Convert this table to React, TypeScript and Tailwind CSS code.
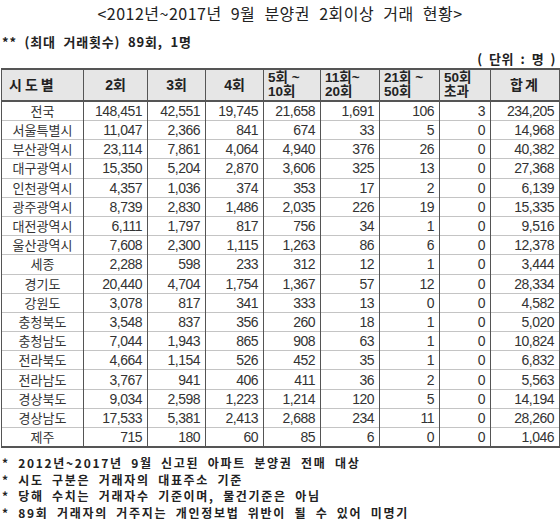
const rows: string[][] = [
  ["전국", "148,451", "42,551", "19,745", "21,658", "1,691", "106", "3", "234,205"],
  ["서울특별시", "11,047", "2,366", "841", "674", "33", "5", "0", "14,968"],
  ["부산광역시", "23,114", "7,861", "4,064", "4,940", "376", "26", "0", "40,382"],
  ["대구광역시", "15,350", "5,204", "2,870", "3,606", "325", "13", "0", "27,368"],
  ["인천광역시", "4,357", "1,036", "374", "353", "17", "2", "0", "6,139"],
  ["광주광역시", "8,739", "2,830", "1,486", "2,035", "226", "19", "0", "15,335"],
  ["대전광역시", "6,111", "1,797", "817", "756", "34", "1", "0", "9,516"],
  ["울산광역시", "7,608", "2,300", "1,115", "1,263", "86", "6", "0", "12,378"],
  ["세종", "2,288", "598", "233", "312", "12", "1", "0", "3,444"],
  ["경기도", "20,440", "4,704", "1,754", "1,367", "57", "12", "0", "28,334"],
  ["강원도", "3,078", "817", "341", "333", "13", "0", "0", "4,582"],
  ["충청북도", "3,548", "837", "356", "260", "18", "1", "0", "5,020"],
  ["충청남도", "7,044", "1,943", "865", "908", "63", "1", "0", "10,824"],
  ["전라북도", "4,664", "1,154", "526", "452", "35", "1", "0", "6,832"],
  ["전라남도", "3,767", "941", "406", "411", "36", "2", "0", "5,563"],
  ["경상북도", "9,034", "2,598", "1,223", "1,214", "120", "5", "0", "14,194"],
  ["경상남도", "17,533", "5,381", "2,413", "2,688", "234", "11", "0", "28,260"],
  ["제주", "715", "180", "60", "85", "6", "0", "0", "1,046"],
];

const widths = [82, 64, 58, 58, 57, 59, 60, 51, 69];

const notes = [
  "* 2012년~2017년 9월 신고된 아파트 분양권 전매 대상",
  "* 시도 구분은 거래자의 대표주소 기준",
  "* 당해 수치는 거래자수 기준이며, 물건기준은 아님",
  "* 89회 거래자의 거주지는 개인정보법 위반이 될 수 있어 미명기",
];

const kr = "font-['Noto_Sans_CJK_KR',sans-serif]";
const num = "font-['Liberation_Sans','Noto_Sans_CJK_KR',sans-serif]";

function TwoLine({ a, b }: { a: string; b: string }) {
  return (
    <div className="flex flex-col items-start pl-[4px] text-[13.5px] leading-[14px]">
      <span className="block h-[14px] leading-[14px]">{a}</span>
      <span className="block h-[14px] leading-[14px]">{b}</span>
    </div>
  );
}

export default function App() {
  return (
    <div className={`w-[560px] h-[521px] overflow-hidden bg-white text-[#222] ${kr}`}>
      <div className="h-[26px] flex items-center justify-center text-[16px] tracking-[0.5px] [word-spacing:5px]">
        &lt;2012년~2017년 9월 분양권 2회이상 거래 현황&gt;
      </div>
      <div className="mt-[8px] h-[16px] leading-[16px] pl-[2px] text-[13px] font-bold tracking-[0.8px] [word-spacing:4px]">
        ** (최대 거래횟수) 89회, 1명
      </div>
      <div className="h-[18px] leading-[18px] pr-[4px] text-right text-[13px] font-bold tracking-[0.5px] [word-spacing:3px]">
        ( 단위 : 명 )
      </div>
      <table className="ml-[1px] border-collapse table-fixed w-[558px]">
        <colgroup>
          {widths.map((w, i) => (
            <col key={i} style={{ width: w }} />
          ))}
        </colgroup>
        <thead>
          <tr className={`h-[32px] bg-[#e6e6e6] border-y-2 border-[#555] text-[14px] font-bold ${num}`}>
            <th className="border-x border-[#555] text-left pl-[7px] tracking-[3px]">시도별</th>
            <th className="border-x border-[#555]">2회</th>
            <th className="border-x border-[#555]">3회</th>
            <th className="border-x border-[#555]">4회</th>
            <th className="border-x border-[#555] p-0"><TwoLine a="5회 ~" b="10회" /></th>
            <th className="border-x border-[#555] p-0"><TwoLine a="11회~" b="20회" /></th>
            <th className="border-x border-[#555] p-0"><TwoLine a="21회 ~" b="50회" /></th>
            <th className="border-x border-[#555] p-0"><TwoLine a="50회" b="초과" /></th>
            <th className="border-x border-[#555] tracking-[2px]">합계</th>
          </tr>
        </thead>
        <tbody>
          {rows.map((r, i) => (
            <tr
              key={i}
              className={`h-[19.2px] ${i === rows.length - 1 ? "border-b-2 border-b-[#555]" : "border-b border-b-[#c4c4c4]"}`}
            >
              {r.map((c, j) =>
                j === 0 ? (
                  <td key={j} className="border-x border-x-[#555] text-center text-[13px] leading-[18px] tracking-[0px] text-[#333]">
                    {c}
                  </td>
                ) : (
                  <td key={j} className={`border-x border-x-[#555] text-right pr-[5px] text-[14px] leading-[18px] tracking-[-0.5px] text-[#333] ${num}`}>
                    {c}
                  </td>
                )
              )}
            </tr>
          ))}
        </tbody>
      </table>
      <div className="mt-[7px] pl-[2px] text-[12px] font-bold leading-[16.5px] tracking-[1.7px] [word-spacing:4px]">
        {notes.map((n, i) => (
          <div key={i} className="whitespace-nowrap">{n}</div>
        ))}
      </div>
    </div>
  );
}
